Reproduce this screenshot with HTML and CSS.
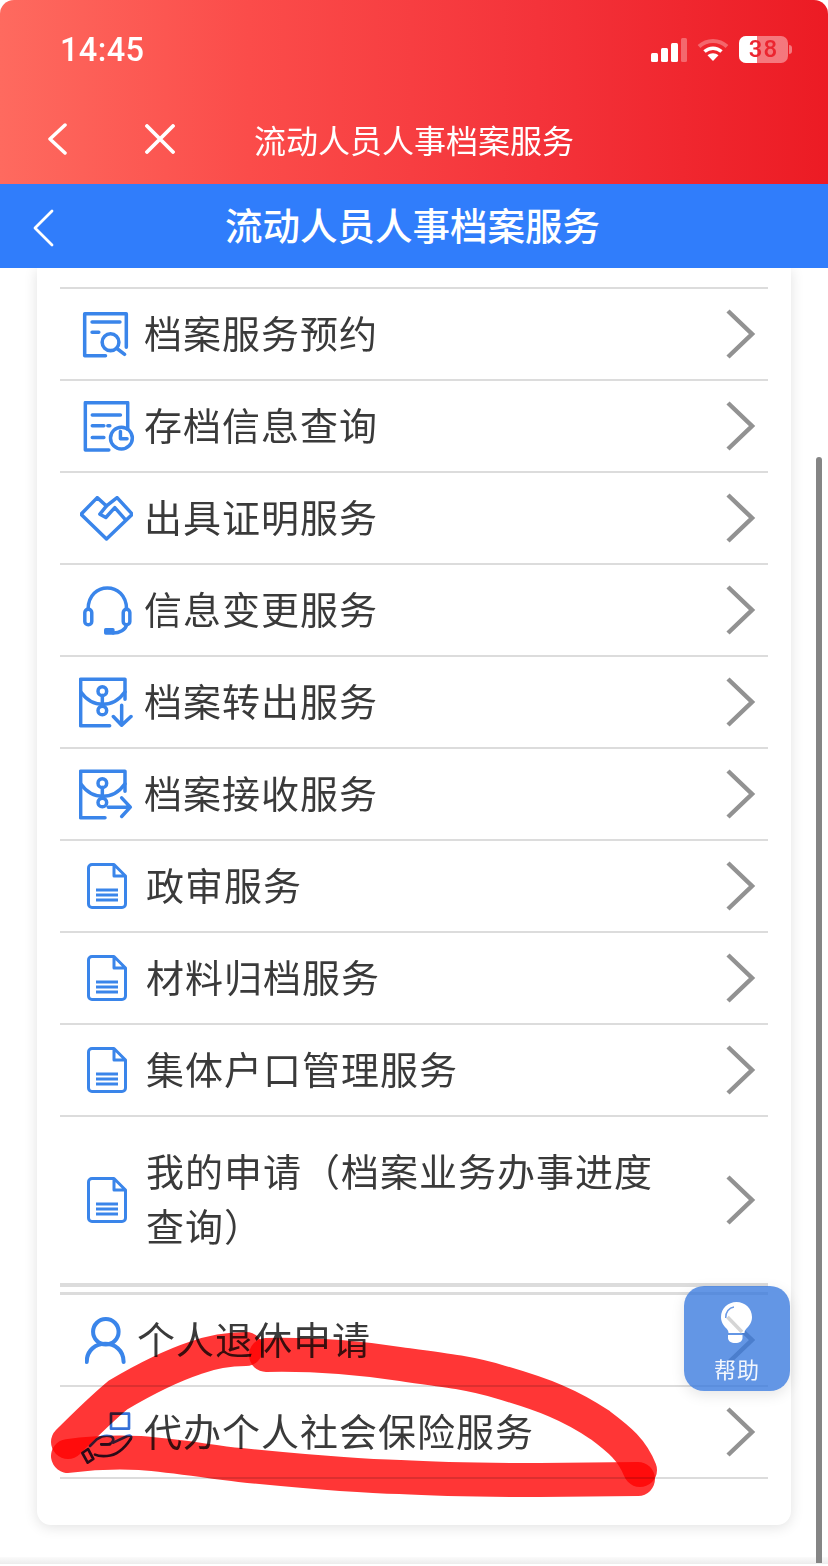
FILE: index.html
```html
<!DOCTYPE html>
<html lang="zh-CN">
<head>
<meta charset="utf-8">
<title>流动人员人事档案服务</title>
<link rel="stylesheet" href="styles.css">
</head>
<body>
<div class="page">
  <header class="app-header">
    <div class="status-bar">
      <span class="time">14:45</span>
      <div class="status-icons">
        <svg class="signal" viewBox="0 0 36 24"><rect x="0" y="15" width="7" height="9" rx="1.5" fill="#fff"/><rect x="10" y="10" width="7" height="14" rx="1.5" fill="#fff"/><rect x="20" y="5" width="7" height="19" rx="1.5" fill="#fff"/><rect x="30" y="0" width="6" height="24" rx="1.5" fill="#fff" opacity=".3"/></svg>
        <svg class="wifi" viewBox="0 0 32 24"><path d="M2 8.500C10 1 22 1 30 8.500" fill="none" stroke="#fff" stroke-width="4" opacity=".3"/><path d="M7.500 13.500C12.500 9 19.500 9 24.500 13.500" fill="none" stroke="#fff" stroke-width="3.500"/><path d="M16 23l-5.500-5.800c3-2.700 8-2.700 11 0z" fill="#fff"/></svg>
        <div class="battery"><span class="battery-fill"></span><span class="battery-num">38</span></div>
        <span class="battery-tip"></span>
      </div>
    </div>
    <div class="web-nav">
      <svg class="web-back" viewBox="0 0 20 32"><path d="M18 2L3 16l15 14" fill="none" stroke="#fff" stroke-width="3.500" stroke-linecap="round" stroke-linejoin="round"/></svg>
      <svg class="web-close" viewBox="0 0 30 30"><path d="M2 2l26 26M28 2L2 28" fill="none" stroke="#fff" stroke-width="3.800" stroke-linecap="round"/></svg>
      <span class="web-title">流动人员人事档案服务</span>
    </div>
  </header>
  <nav class="blue-bar">
    <svg class="blue-back" viewBox="0 0 22 38"><path d="M20 2L3 19l17 17" fill="none" stroke="#fff" stroke-width="2.800" stroke-linecap="round" stroke-linejoin="round"/></svg>
    <h1 class="blue-title">流动人员人事档案服务</h1>
  </nav>
  <main class="content">
    <section class="card">
      <ul class="group first-group">
        <li class="row">
          <span class="slot"><svg class="ic i-search" viewBox="65 62 140 140"><g class="st"><path d="M135 195H73V70h124v100"/><path d="M95 95h83M95 125h20"/><circle cx="150" cy="155" r="25"/><path d="M168 173l24 18"/></g></svg></span>
          <span class="label">档案服务预约</span>
          <svg class="chev" viewBox="0 0 30 50"><path d="M2 2l24 23L2 48"/></svg>
        </li>
        <li class="row">
          <span class="slot"><svg class="ic i-clock" viewBox="68 340 158 154"><g class="st"><path d="M145 488H74V345h128v80"/><path d="M95 382h85M95 415h35M142 415h6M95 450h35"/><circle cx="183" cy="452" r="33"/><path d="M180 432v22h20"/></g></svg></span>
          <span class="label">存档信息查询</span>
          <svg class="chev" viewBox="0 0 30 50"><path d="M2 2l24 23L2 48"/></svg>
        </li>
        <li class="row">
          <span class="slot"><svg class="ic i-heart" viewBox="60 615 160 136"><g class="st"><path d="M63 670l49-50 28 25 32-25 46 50-78 75z"/><path d="M140 645l-20 25 18 10 27-30 30 34"/></g></svg></span>
          <span class="label">出具证明服务</span>
          <svg class="chev" viewBox="0 0 30 50"><path d="M2 2l24 23L2 48"/></svg>
        </li>
        <li class="row">
          <span class="slot"><svg class="ic i-head" viewBox="66 52 150 154"><g class="st"><path d="M84 125C84 40 200 40 200 125"/><rect x="74" y="125" width="21" height="47" rx="10"/><rect x="190" y="125" width="20" height="47" rx="10"/><path d="M200 172c-2 15-22 25-40 25"/></g><rect x="132" y="182" width="32" height="20" rx="5" fill="#3a85ea"/></svg></span>
          <span class="label">信息变更服务</span>
          <svg class="chev" viewBox="0 0 30 50"><path d="M2 2l24 23L2 48"/></svg>
        </li>
        <li class="row">
          <span class="slot"><svg class="ic i-box" viewBox="58 328 162 152"><g class="st"><path d="M150 474H63V334h133v60"/><path d="M63 372c35 50 98 50 133 0"/><circle cx="128" cy="370" r="13"/><circle cx="128" cy="428" r="13"/><path d="M128 383v32"/><path d="M186 412v58M161 446l25 26 28-26"/></g></svg></span>
          <span class="label">档案转出服务</span>
          <svg class="chev" viewBox="0 0 30 50"><path d="M2 2l24 23L2 48"/></svg>
        </li>
        <li class="row">
          <span class="slot"><svg class="ic i-box" viewBox="58 328 162 152"><g class="st"><path d="M136 474H63V334h133v60"/><path d="M63 372c35 50 98 50 133 0"/><circle cx="128" cy="370" r="13"/><circle cx="128" cy="428" r="13"/><path d="M128 383v32"/><path d="M146 442h64M186 414l26 28-26 28"/></g></svg></span>
          <span class="label">档案接收服务</span>
          <svg class="chev" viewBox="0 0 30 50"><path d="M2 2l24 23L2 48"/></svg>
        </li>
        <li class="row doc-row">
          <span class="slot"><svg class="ic i-doc" viewBox="0 0 40 46"><use href="#doc"/></svg></span>
          <span class="label">政审服务</span>
          <svg class="chev" viewBox="0 0 30 50"><path d="M2 2l24 23L2 48"/></svg>
        </li>
        <li class="row doc-row">
          <span class="slot"><svg class="ic i-doc" viewBox="0 0 40 46"><use href="#doc"/></svg></span>
          <span class="label">材料归档服务</span>
          <svg class="chev" viewBox="0 0 30 50"><path d="M2 2l24 23L2 48"/></svg>
        </li>
        <li class="row doc-row">
          <span class="slot"><svg class="ic i-doc" viewBox="0 0 40 46"><use href="#doc"/></svg></span>
          <span class="label">集体户口管理服务</span>
          <svg class="chev" viewBox="0 0 30 50"><path d="M2 2l24 23L2 48"/></svg>
        </li>
        <li class="row doc-row tall">
          <span class="slot"><svg class="ic i-doc" viewBox="0 0 40 46"><use href="#doc"/></svg></span>
          <span class="label">我的申请（档案业务办事进度查询）</span>
          <svg class="chev" viewBox="0 0 30 50"><path d="M2 2l24 23L2 48"/></svg>
        </li>
      </ul>
      <ul class="group second-group">
        <li class="row person-row">
          <span class="slot"><svg class="ic i-person" viewBox="135 146 122 140"><g class="st thick"><circle cx="197" cy="190" r="38"/><path d="M140 280c0-72 110-72 110 0"/></g></svg></span>
          <span class="label">个人退休申请</span>
          <svg class="chev" viewBox="0 0 30 50"><path d="M2 2l24 23L2 48"/></svg>
        </li>
        <li class="row">
          <span class="slot"><svg class="ic i-hand" viewBox="0 0 195 195"><rect class="hand-blue" x="108" y="23" width="54" height="45"/><path class="hand-blue" d="M45 120l20-20c12-8 30-13 42-9 11 4 9 14 2 20-5 4-18 5-30 4M115 110l42-20c10-3 14 1 10 9"/><path class="hand-navy" d="M22 141l17-12 16 30-17 11zM60 146c10 5 22 5 36 4 28-2 52-22 71-51M79 115h26"/></svg></span>
          <span class="label">代办个人社会保险服务</span>
          <svg class="chev" viewBox="0 0 30 50"><path d="M2 2l24 23L2 48"/></svg>
        </li>
      </ul>
    </section>
    <div class="page-foot"></div>
  </main>
  <svg class="scribble" viewBox="0 0 828 1566" aria-hidden="true">
    <path d="M246 1349C230 1349 214 1351 195 1358C165 1368 140 1382 118 1395C100 1410 85 1425 68 1442"/>
    <path d="M68 1456C90 1453 120 1452 140 1453C180 1456 210 1462 240 1465C290 1470 350 1476 400 1477C450 1480 500 1480 540 1480L638 1479"/>
    <path d="M640 1470C632 1450 620 1440 600 1425C570 1405 545 1395 500 1382C470 1373 445 1370 400 1364C360 1358 310 1354 266 1355"/>
  </svg>
  <aside class="help">
    <svg class="bulb" viewBox="0 0 32 42"><path d="M15.500 0C7 0 0 6.500 0 15c0 6 3.500 9.500 5.500 11.500 1.500 1.500 2 3 2 4.500h16c0-1.500.5-3 2-4.500 2-2 5.500-5.500 5.500-11.500C31 6.500 24 0 15.500 0z" fill="#fff"/><path d="M7 33h14.500v3c0 3-3 5-7.200 5S7 39 7 36z" fill="#fff"/><path d="M4.700 16C4.500 10 8 5.500 13 5" fill="none" stroke="#6b9ae6" stroke-width="1.500"/><path d="M6.500 15L21 30" stroke="#d5d5d5" stroke-width="3.500" fill="none"/></svg>
    <span class="help-text">帮助</span>
  </aside>
  <div class="scrollbar"></div>
</div>
<svg class="defs" aria-hidden="true"><defs><g id="doc"><path class="docline" d="M27 1.500H5A3.500 3.500 0 0 0 1.500 5v36A3.500 3.500 0 0 0 5 44.500h30a3.500 3.500 0 0 0 3.500-3.500V13zM27 1.500V13h11.500M9 27h22M9 32h22M9 37h22"/></g></defs></svg>
</body>
</html>
```
FILE: styles.css
```css
* { box-sizing: border-box; }
html, body { margin: 0; padding: 0; background: #fff; }
body { font-family: "Noto Sans CJK SC", "Noto Sans", sans-serif; }
.defs { position: absolute; width: 0; height: 0; }

.page {
  position: relative;
  width: 828px;
  height: 1566px;
  overflow: hidden;
  display: flex;
  flex-direction: column;
  background: #fff;
}

.app-header {
  height: 184px;
  flex: none;
  border-radius: 14px 14px 0 0;
  background: linear-gradient(90deg, #fe6a5f 0%, #fb4c4a 30%, #f4333a 65%, #ec1b24 100%);
  color: #fff;
  display: flex;
  flex-direction: column;
}
.status-bar {
  height: 100px;
  padding: 0 36px 0 60px;
  display: flex;
  align-items: flex-start;
  justify-content: space-between;
}
.time {
  margin-top: 31px;
  font-family: "Roboto", "Liberation Sans", sans-serif;
  font-size: 32.500px;
  line-height: 38px;
  font-weight: 500;
  letter-spacing: .4px;
}
.status-icons {
  display: flex;
  align-items: center;
  margin-top: 36px;
  height: 27px;
}
.signal { width: 36px; height: 24px; margin-right: 10px; }
.wifi { width: 32px; height: 24px; margin-right: 10px; }
.battery {
  position: relative;
  width: 49px;
  height: 27px;
  border-radius: 7px;
  background: rgba(255, 255, 255, .4);
  overflow: hidden;
  display: flex;
  align-items: center;
  justify-content: center;
}
.battery-fill { position: absolute; left: 0; top: 0; bottom: 0; width: 18px; background: #fff; }
.battery-num {
  position: relative;
  font-family: "Roboto", "Liberation Sans", sans-serif;
  font-size: 24px;
  font-weight: 500;
  line-height: 27px;
  letter-spacing: 1px;
  color: #ec2530;
}
.battery-tip {
  width: 3px;
  height: 9px;
  margin-left: 1px;
  border-radius: 0 3px 3px 0;
  background: rgba(255, 255, 255, .4);
}
.web-nav {
  height: 84px;
  padding: 0 0 6px 47px;
  display: flex;
  align-items: center;
}
.web-back { width: 20px; height: 32px; flex: none; }
.web-close { width: 30px; height: 30px; flex: none; margin-left: 78px; }
.web-title {
  margin-left: 79px;
  font-size: 32px;
  line-height: 44px;
  white-space: nowrap;
}

.blue-bar {
  position: relative;
  height: 84px;
  flex: none;
  padding: 0 3px 4px 0;
  background: #307dfb;
  display: flex;
  align-items: center;
  justify-content: center;
  color: #fff;
  z-index: 2;
}
.blue-back { position: absolute; left: 32px; top: 25px; width: 22px; height: 38px; }
.blue-title { margin: 0; font-size: 37.500px; font-weight: 500; line-height: 50px; white-space: nowrap; }

.content {
  flex: 1;
  min-height: 0;
  display: flex;
  flex-direction: column;
  padding: 0 37px;
  background: #fff;
}
.card {
  flex: none;
  height: 1257px;
  padding: 19px 23px 0;
  background: #fff;
  border-radius: 0 0 14px 14px;
  box-shadow: 0 2px 14px rgba(0, 0, 0, .12);
}
.group { list-style: none; margin: 0; padding: 0; }
.first-group { border-top: 2px solid #dcdcdc; }
.second-group { margin-top: 5px; border-top: 3px solid #dcdcdc; }

.row {
  display: flex;
  align-items: center;
  height: 92px;
  border-bottom: 2px solid #dcdcdc;
  padding-right: 12px;
}
.first-group .row.tall { height: 170px; border-bottom-width: 4px; }
.slot { flex: none; width: 84px; display: flex; justify-content: flex-start; }
.doc-row .slot { width: 86px; }
.person-row .slot { width: 77px; }
.label {
  flex: 1;
  min-width: 0;
  padding-bottom: 6px;
  font-size: 38px;
  line-height: 55px;
  letter-spacing: 1px;
  color: #3a3a3a;
}
.tall .label { padding-right: 40px; }
.chev { flex: none; width: 30px; height: 50px; fill: none; stroke: #929292; stroke-width: 4.500; }

.ic { display: block; flex: none; }
.st { fill: none; stroke: #3a85ea; stroke-width: 10.500; stroke-linecap: round; stroke-linejoin: round; }
.st.thick { stroke-width: 12; }
.docline { fill: none; stroke: #3a85ea; stroke-width: 3; stroke-linejoin: round; }
.hand-blue { fill: none; stroke: #3470d8; stroke-width: 8; stroke-linecap: round; stroke-linejoin: round; }
.hand-navy { fill: none; stroke: #2a2f6b; stroke-width: 8; stroke-linecap: round; stroke-linejoin: round; }
.i-search { width: 47px; height: 47px; margin-left: 22px; }
.i-clock { width: 53px; height: 51px; margin-left: 23px; }
.i-heart { width: 53px; height: 45px; margin-left: 20px; }
.i-head { width: 50px; height: 51px; margin-left: 22px; }
.i-box { width: 54px; height: 51px; margin-left: 19px; }
.i-doc { width: 40px; height: 46px; margin-left: 27px; }
.i-person { width: 41px; height: 47px; margin-left: 25px; }
.i-hand { width: 65px; height: 65px; margin-left: 15px; margin-top: 13px; }

.page-foot {
  height: 7px;
  margin: 32px -37px 0;
  background: linear-gradient(#fbfbfb, #ececec);
}

.scribble {
  position: absolute;
  left: 0;
  top: 0;
  width: 828px;
  height: 1566px;
  pointer-events: none;
}
.scribble path {
  fill: none;
  stroke: #ff3636;
  stroke-width: 34;
  stroke-linecap: round;
  stroke-linejoin: round;
  mix-blend-mode: multiply;
}

.help {
  position: absolute;
  left: 684px;
  top: 1286px;
  width: 106px;
  height: 105px;
  border-radius: 20px;
  background: rgba(55, 120, 222, .78);
  box-shadow: 0 4px 14px rgba(0, 0, 0, .1);
  display: flex;
  flex-direction: column;
  align-items: center;
  color: #fff;
}
.bulb { width: 32px; height: 42px; margin-top: 16px; }
.help-text { font-size: 22px; line-height: 30px; margin-top: 9px; letter-spacing: 1px; opacity: .92; }

.scrollbar {
  position: absolute;
  left: 816px;
  top: 457px;
  width: 6px;
  height: 1106px;
  border-radius: 3px 3px 0 0;
  background: #858585;
}
```
